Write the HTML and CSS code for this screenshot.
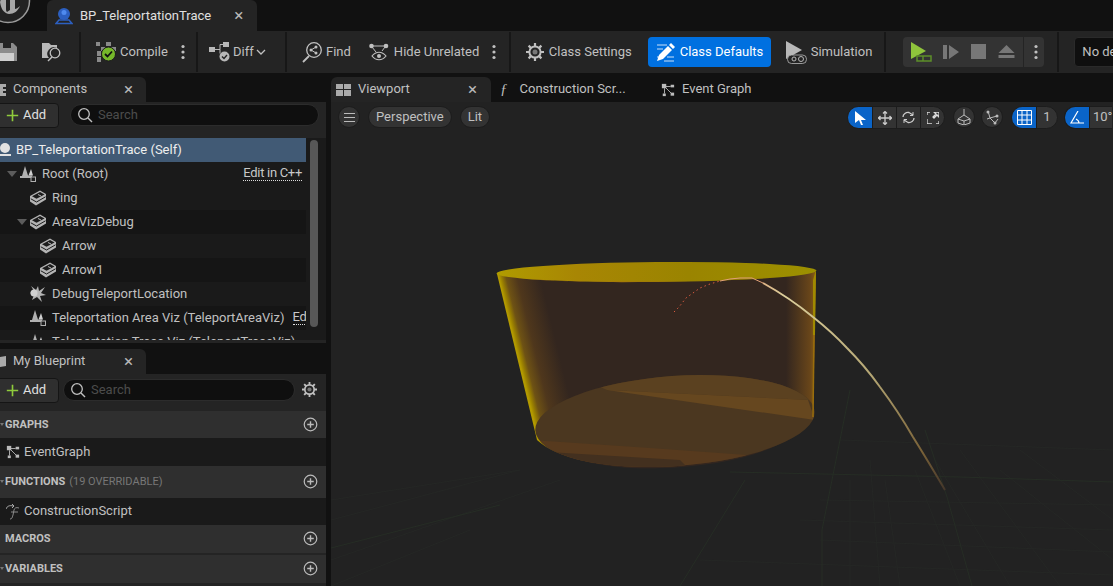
FILE: index.html
```html
<!DOCTYPE html>
<html lang="en">
<head>
    <meta charset="UTF-8">
    <meta name="viewport" content="width=device-width, initial-scale=1.0">
    <title>BP_TeleportationTrace</title>
    <link rel="stylesheet" href="styles.css">
</head>
<body>
    <svg class="defs" width="0" height="0">
        <defs>
            <symbol id="i-cube" viewBox="0 0 16 16">
                <path d="M10 .500 16 4V9.500L6 15.500 0 11.500V6Z" fill="#b4b4b4"/>
                <path d="M10 2 14.500 4.400 6.500 8.800 2 6.200Z" fill="#1c1c1c"/>
                <path d="M8 4.500 11 6" stroke="#b4b4b4"/>
                <path d="M.800 8.800 6.500 12 15.500 6.800" fill="none" stroke="#1c1c1c"/>
            </symbol>
            <symbol id="i-scene" viewBox="0 0 16 16">
                <path d="M5 0 8 9.500H12V12H0V10H2Z" fill="#b0b0b0"/>
                <path d="M11 3 13 9.500H8.500Z" fill="#d0d0d0"/>
                <rect x="11" y="11" width="4.500" height="4.500" fill="#1c1c1c" stroke="#b0b0b0"/>
            </symbol>
            <symbol id="i-plus" viewBox="0 0 16 16">
                <path d="M8 1v14M1 8h14" stroke="#8fcb3c" stroke-width="2"/>
            </symbol>
            <symbol id="i-search" viewBox="0 0 16 16">
                <circle cx="7" cy="7" r="5.300" fill="none" stroke="#c0c0c0" stroke-width="1.300"/>
                <path d="M11 11l4 4" stroke="#c0c0c0" stroke-width="1.500"/>
            </symbol>
            <symbol id="i-add-round" viewBox="0 0 16 16">
                <circle cx="8" cy="8" r="6.700" fill="none" stroke="#bbb" stroke-width="1.300"/>
                <path d="M8 4.500v7M4.500 8h7" stroke="#bbb" stroke-width="1.500"/>
            </symbol>
            <symbol id="i-gear" viewBox="0 0 18 18">
                <circle cx="9" cy="9" r="5.600" fill="none" stroke="#c0c0c0" stroke-width="2"/>
                <circle cx="9" cy="9" r="2.500" fill="#777"/>
                <path d="M9 0v3.500M9 14.500V18M0 9h3.500M14.500 9H18M2.600 2.600l2.500 2.500M12.900 12.900l2.500 2.500M15.400 2.600l-2.500 2.500M5.100 12.900l-2.500 2.500" stroke="#c0c0c0" stroke-width="2.200"/>
            </symbol>
            <symbol id="i-graph" viewBox="0 0 16 16">
                <rect x="1" y="1" width="5" height="5" fill="#bbb"/>
                <rect x="11" y="2" width="4" height="3" fill="#bbb"/>
                <rect x="2" y="12" width="3.500" height="3" fill="#bbb"/>
                <rect x="11" y="11" width="4" height="3.500" fill="#bbb"/>
                <path d="M5 4h6M4 6v6M5 5l7 7" stroke="#bbb"/>
            </symbol>
            <symbol id="i-kebab" viewBox="0 0 4 16">
                <circle cx="2" cy="2.500" r="1.600" fill="#c0c0c0"/>
                <circle cx="2" cy="8" r="1.600" fill="#c0c0c0"/>
                <circle cx="2" cy="13.500" r="1.600" fill="#c0c0c0"/>
            </symbol>
        </defs>
    </svg>

    <div class="app">
        <div class="titlebar">
            <svg class="ue-logo" width="31" height="31" viewBox="0 0 31 31">
                <circle cx="8" cy="1" r="21.500" fill="#222" stroke="#9a9a9a" stroke-width="1.500"/>
                <path d="M0 2c1 6 3 11 9 12 5 0 9-3 11-8-2 2-4 3-5 3V-1H10v11L7 12c-1-1-1-2-1-4V-1H1Z" fill="#a8a8a8"/>
            </svg>
            <div class="doc-tab">
                <svg width="18" height="18" viewBox="0 0 18 18">
                    <circle cx="9" cy="7" r="6" fill="#2c5fc0"/>
                    <circle cx="9" cy="5.500" r="2.500" fill="#4f8aee"/>
                    <path d="M1 16.500 4 13H14L17 16.500Z" fill="none" stroke="#2c5fc0" stroke-width="1.500"/>
                </svg>
                <span class="doc-name">BP_TeleportationTrace</span>
                <span class="close">×</span>
            </div>
        </div>

        <div class="toolbar">
            <div class="tb-group tb-file">
                <svg width="18" height="18" viewBox="0 0 18 18">
                    <path d="M0 0H13L17 4V18H0Z" fill="#8c8c8c"/>
                    <rect x="3" y="0" width="8" height="5" fill="#242424"/>
                    <rect x="0" y="10" width="14" height="8" fill="#cfcfcf"/>
                </svg>
                <svg class="tb-browse" width="21" height="20" viewBox="0 0 21 20">
                    <path d="M0 1H7L9 3H15V6A6.500 6.500 0 0 0 7 16H0Z" fill="#b8b8b8"/>
                    <circle cx="13" cy="11" r="4.800" fill="none" stroke="#c0c0c0" stroke-width="1.300"/>
                    <path d="M10 15l-4 4" stroke="#c0c0c0" stroke-width="1.500"/>
                </svg>
            </div>
            <div class="sep"></div>
            <div class="tb-group tb-compile">
                <svg width="21" height="20" viewBox="0 0 21 20">
                    <path d="M0 0h4v4H0zM5 5h4v4H5zM10 0h5v4h-5zM15 5h5v4h-5zM1 9h4v5H1zM1 15h4v5H1z" fill="#8a8a8a"/>
                    <circle cx="12.500" cy="12" r="7" fill="#76b82a" stroke="#1c1c1c"/>
                    <path d="M9 12l2.500 2.500 4.500-5" fill="none" stroke="#111" stroke-width="1.800"/>
                </svg>
                <span class="tb-label">Compile</span>
                <svg class="kebab" width="4" height="16"><use href="#i-kebab"/></svg>
            </div>
            <div class="sep"></div>
            <div class="tb-group tb-diff">
                <svg width="24" height="20" viewBox="0 0 24 20">
                    <rect x="0" y="5" width="6" height="5" fill="#b8b8b8"/>
                    <rect x="14" y="0" width="6" height="5" fill="#b8b8b8"/>
                    <path d="M6 7.500h5V2.500h3M11 7.500v4" stroke="#b8b8b8" fill="none"/>
                    <circle cx="15.500" cy="14.500" r="5" fill="#b8b8b8"/>
                    <path d="M13 14.500l2 2 3-3.500" fill="none" stroke="#222" stroke-width="1.400"/>
                </svg>
                <span class="tb-label">Diff</span>
                <svg width="10" height="6" viewBox="0 0 10 6"><path d="M1 1l4 4 4-4" fill="none" stroke="#c0c0c0" stroke-width="1.300"/></svg>
            </div>
            <div class="sep"></div>
            <div class="tb-group tb-find">
                <svg width="20" height="22" viewBox="0 0 20 22">
                    <circle cx="12" cy="9" r="7.300" fill="none" stroke="#c0c0c0" stroke-width="1.300"/>
                    <path d="M7 15l-6 6" stroke="#c0c0c0" stroke-width="1.800"/>
                    <path d="M9 9l5-3M9 9l5 3" stroke="#c0c0c0"/>
                    <circle cx="9" cy="9" r="1.500" fill="#c0c0c0"/><circle cx="14" cy="6" r="1.500" fill="#c0c0c0"/><circle cx="14" cy="12" r="1.500" fill="#c0c0c0"/>
                </svg>
                <span class="tb-label">Find</span>
            </div>
            <div class="tb-group tb-hide">
                <svg width="20" height="19" viewBox="0 0 20 19">
                    <circle cx="2.500" cy="3" r="2.300" fill="#c0c0c0"/><circle cx="17" cy="3" r="2.300" fill="#c0c0c0"/>
                    <path d="M2.500 3H17M3 4l4 5M16 4l-3 4" stroke="#c0c0c0"/>
                    <path d="M3 13c4-5 10-5 14 0-4 5-10 5-14 0Z" fill="none" stroke="#c0c0c0" stroke-width="1.200"/>
                    <circle cx="10" cy="13" r="2" fill="#c0c0c0"/>
                </svg>
                <span class="tb-label">Hide Unrelated</span>
                <svg class="kebab" width="4" height="16"><use href="#i-kebab"/></svg>
            </div>
            <div class="sep"></div>
            <div class="tb-group tb-settings">
                <svg width="18" height="18"><use href="#i-gear"/></svg>
                <span class="tb-label">Class Settings</span>
            </div>
            <div class="tb-defaults">
                <svg width="19" height="19" viewBox="0 0 19 19">
                    <path d="M1 2h10M1 6h6M1 14h2M8 18h10M11 14h7" stroke="#fff" stroke-width=".8"/>
                    <path d="M1 18l2-6L12 3l4 4-9 9Z" fill="#fff"/>
                    <path d="M13 2l2-2 4 4-2 2Z" fill="#fff"/>
                </svg>
                <span class="tb-label">Class Defaults</span>
            </div>
            <div class="tb-group tb-sim">
                <svg width="21" height="23" viewBox="0 0 21 23">
                    <path d="M0 0 16 9 0 18Z" fill="#b8b8b8"/>
                    <rect x="1.500" y="14" width="19" height="8.500" rx="4" fill="#242424" stroke="#b8b8b8" stroke-width=".8"/>
                    <circle cx="8" cy="18" r="2" fill="none" stroke="#b8b8b8"/><circle cx="15" cy="18" r="2.500" fill="none" stroke="#b8b8b8"/>
                </svg>
                <span class="tb-label">Simulation</span>
            </div>
            <div class="sep sep-play"></div>
            <div class="play-group">
                <svg class="play-main" width="21" height="20" viewBox="0 0 21 20">
                    <path d="M0 0 15 9 0 17Z" fill="#8fc43c"/>
                    <rect x="6" y="14" width="14" height="5" fill="none" stroke="#5d8f2a" stroke-width="1.500"/>
                    <path d="M12 14v5" stroke="#5d8f2a" stroke-width="1.500"/>
                </svg>
                <svg class="play-ico" width="16" height="16" viewBox="0 0 16 16"><path d="M0 1h4v14H0zM6 1l10 7-10 7Z" fill="#777"/></svg>
                <svg class="play-ico" width="15" height="16" viewBox="0 0 15 16"><rect width="15" height="15" fill="#777"/></svg>
                <svg class="play-ico" width="17" height="16" viewBox="0 0 17 16"><path d="M8.500 1 16.500 9H.500ZM.500 11h16v3H.500Z" fill="#777"/></svg>
                <div class="play-more"><svg width="4" height="16"><use href="#i-kebab"/></svg></div>
            </div>
            <div class="sep sep-target"></div>
            <div class="target-box">No de</div>
        </div>

        <div class="workspace">
            <div class="side">
                <div class="panel-tab">
                    <svg class="tab-ico" width="6" height="12" viewBox="0 0 6 12"><path d="M0 0h6v3H3v2h3v2H3v2h3v3H0Z" fill="#aaa"/></svg>
                    <span class="tab-name">Components</span>
                    <span class="close">×</span>
                </div>
                <div class="panel components">
                    <div class="panel-bar">
                        <div class="add-btn"><svg width="13" height="13"><use href="#i-plus"/></svg><span>Add</span></div>
                        <div class="search-box"><svg width="16" height="16"><use href="#i-search"/></svg><span>Search</span></div>
                    </div>
                    <div class="tree-wrap">
                        <div class="tree">
                            <div class="row selected">
                                <svg width="13" height="14" viewBox="0 0 13 14"><circle cx="5" cy="5" r="5" fill="#e2e2e2"/><path d="M0 12h11" stroke="#e2e2e2" stroke-width="2"/></svg>
                                <span>BP_TeleportationTrace (Self)</span>
                            </div>
                            <div class="row lvl-0">
                                <i class="arrow"></i><svg width="16" height="16"><use href="#i-scene"/></svg>
                                <span>Root (Root)</span><span class="edit">Edit in C++</span>
                            </div>
                            <div class="row alt lvl-1"><svg width="16" height="16"><use href="#i-cube"/></svg><span>Ring</span></div>
                            <div class="row lvl-1b">
                                <i class="arrow"></i><svg width="16" height="16"><use href="#i-cube"/></svg><span>AreaVizDebug</span>
                            </div>
                            <div class="row alt lvl-2"><svg width="16" height="16"><use href="#i-cube"/></svg><span>Arrow</span></div>
                            <div class="row lvl-2"><svg width="16" height="16"><use href="#i-cube"/></svg><span>Arrow1</span></div>
                            <div class="row alt lvl-1">
                                <svg width="16" height="16" viewBox="0 0 16 16"><path d="M8 0 9 5 15 1 11 7 16 9 10 10 12 16 7 11 2 14 4 9 0 7 4 5 1 0 6 4Z" fill="#b4b4b4"/><circle cx="4" cy="7" r="3.500" fill="#d0d0d0"/></svg>
                                <span>DebugTeleportLocation</span>
                            </div>
                            <div class="row lvl-1">
                                <svg width="16" height="16"><use href="#i-scene"/></svg>
                                <span>Teleportation Area Viz (TeleportAreaViz)</span><span class="edit edit-cut">Ed</span>
                            </div>
                            <div class="row alt lvl-1">
                                <svg width="16" height="16"><use href="#i-scene"/></svg>
                                <span>Teleportation Trace Viz (TeleportTraceViz)</span>
                            </div>
                        </div>
                        <div class="scrollbar"></div>
                    </div>
                </div>

                <div class="panel-tab tab-second">
                    <svg class="tab-ico" width="6" height="12" viewBox="0 0 6 12"><path d="M0 1 6 0V10L0 11Z" fill="#aaa"/></svg>
                    <span class="tab-name">My Blueprint</span>
                    <span class="close">×</span>
                </div>
                <div class="panel blueprint">
                    <div class="panel-bar bar-bp">
                        <div class="add-btn"><svg width="13" height="13"><use href="#i-plus"/></svg><span>Add</span></div>
                        <div class="search-box"><svg width="16" height="16"><use href="#i-search"/></svg><span>Search</span></div>
                        <svg class="bp-gear" width="15" height="15"><use href="#i-gear"/></svg>
                    </div>
                    <div class="section"><i class="mini-arrow"></i><b>GRAPHS</b><svg width="15" height="15"><use href="#i-add-round"/></svg></div>
                    <div class="item item-graph">
                        <svg width="14" height="14"><use href="#i-graph"/></svg><span>EventGraph</span>
                    </div>
                    <div class="section sec-tall"><i class="mini-arrow"></i><b>FUNCTIONS</b><em>(19 OVERRIDABLE)</em><svg width="15" height="15"><use href="#i-add-round"/></svg></div>
                    <div class="item item-script">
                        <svg width="15" height="16" viewBox="0 0 15 16"><path d="M0 5c1-3 4-4 7-3M6 0l2 2-2 2" fill="none" stroke="#aaa"/><path d="M4 15c2 0 2-1 3-4l1-5c.5-2 2-3 5-2M5 8h7" fill="none" stroke="#888"/></svg>
                        <span>ConstructionScript</span>
                    </div>
                    <div class="section sec-28"><b>MACROS</b><svg width="15" height="15"><use href="#i-add-round"/></svg></div>
                    <div class="section sec-28 sec-gap"><i class="mini-arrow"></i><b>VARIABLES</b><svg width="15" height="15"><use href="#i-add-round"/></svg></div>
                </div>
            </div>

            <div class="main">
                <div class="main-tabs">
                    <div class="main-tab active">
                        <svg width="15" height="12" viewBox="0 0 15 12"><path d="M0 0h7v5H0zM8 0h7v5H8zM0 6h7v6H0zM8 6h7v6H8z" fill="#aaa"/></svg>
                        <span class="tab-name">Viewport</span>
                        <span class="close">×</span>
                    </div>
                    <div class="main-tab script-tab">
                        <span class="fn-ico">ƒ</span>
                        <span class="tab-name">Construction Scr...</span>
                    </div>
                    <div class="main-tab graph-tab">
                        <svg width="14" height="14"><use href="#i-graph"/></svg>
                        <span class="tab-name">Event Graph</span>
                    </div>
                </div>
                <div class="viewport">
                    <svg class="scene" width="782" height="456" viewBox="331 130 782 456">
                        <defs>
                            <linearGradient id="g-left" gradientUnits="userSpaceOnUse" x1="498" y1="274" x2="547" y2="262">
                                <stop offset="0" stop-color="#b39a00"/>
                                <stop offset=".05" stop-color="#9a8000"/>
                                <stop offset=".14" stop-color="#6e5214"/>
                                <stop offset=".35" stop-color="#4f371c"/>
                                <stop offset=".8" stop-color="#33261f"/>
                            </linearGradient>
                            <linearGradient id="g-right" x1="0" x2="1" y1="0" y2="0">
                                <stop offset="0" stop-color="#7a5018" stop-opacity="0"/>
                                <stop offset=".8" stop-color="#7a5018" stop-opacity=".75"/>
                                <stop offset="1" stop-color="#8f6212"/>
                            </linearGradient>
                            <linearGradient id="g-top" x1="0" x2="1" y1="0" y2="0">
                                <stop offset="0" stop-color="#b09c00"/>
                                <stop offset=".25" stop-color="#a88604"/>
                                <stop offset=".6" stop-color="#9a8400"/>
                                <stop offset="1" stop-color="#9c9000"/>
                            </linearGradient>
                            <linearGradient id="g-top-low" x1="0" x2="1" y1="0" y2="0">
                                <stop offset="0" stop-color="#b07c08" stop-opacity="0"/>
                                <stop offset=".25" stop-color="#b0750a"/>
                                <stop offset=".65" stop-color="#9c7604"/>
                                <stop offset="1" stop-color="#a07a04" stop-opacity="0"/>
                            </linearGradient>
                            <linearGradient id="g-trace" gradientUnits="userSpaceOnUse" x1="740" y1="277" x2="945" y2="490">
                                <stop offset="0" stop-color="#e09a70"/>
                                <stop offset=".15" stop-color="#dccf9c"/>
                                <stop offset=".55" stop-color="#b4a674"/>
                                <stop offset=".85" stop-color="#7a6238"/>
                                <stop offset="1" stop-color="#44362a"/>
                            </linearGradient>
                            <clipPath id="c-floor"><ellipse cx="675" cy="421" rx="140" ry="45" transform="rotate(-4 675 421)"/></clipPath>
                        </defs>

                        <g class="grid-minor">
                            <path d="M331 520 520 470M331 560 560 480M331 586 470 530M960 586 915 470M1010 586 935 460M1060 586 960 450M880 586 870 460M1113 560 1000 470M1113 520 1020 450M900 586 885 480M850 586 850 480"/>
                            <path d="M331 500 520 470M800 520 1113 530M700 560 1113 575M820 500 1113 505M840 440 1113 450M820 540 1113 552"/>
                        </g>
                        <g class="grid-major">
                            <path d="M822 530 850 390M822 586 822 530M947 497 925 430M947 497 972 586M730 472 960 477 1113 482M680 586 745 480M331 548 500 505"/>
                        </g>

                        <path d="M497 274 537 440C560 462 620 470 660 468 730 466 790 450 813 417L816 270Z" fill="url(#g-left)"/>
                        <path d="M786 272H816L813 417 786 436Z" fill="url(#g-right)"/>

                        <ellipse cx="675" cy="421" rx="140" ry="45" transform="rotate(-4 675 421)" fill="#4b3720"/>
                        <g clip-path="url(#c-floor)">
                            <path d="M540 360 H830 V400 L808 400 607 390 Z" fill="#5b4120"/>
                            <path d="M607 390 808 400 815 420Z" fill="#66471f"/>
                            <path d="M530 440 650 448 747 455 700 480H530Z" fill="#573a1e"/>
                            <path d="M548 452 680 460 700 480H548Z" fill="#43301f"/>
                        </g>
                        <path d="M813 280 816 270 815 335 813 335Z" fill="#a08a00"/>
                        <path class="edge-right" d="M814 335 813 417"/>

                        <ellipse cx="656.500" cy="272" rx="160" ry="10" transform="rotate(-.5 656 272)" fill="url(#g-top)"/>
                        <path d="M505 277C560 284 680 284 790 276L760 279C680 282 600 282 560 281Z" fill="url(#g-top-low)"/>

                        <path class="trace-red" d="M674 312 679 307 686 298 693 293 700 288 710 284 720 281"/>
                        <path class="trace-near" d="M720 281 730 279 740 278 752 278 763 283"/>
                        <path class="trace" d="M763 283Q790 298 813 317 832 332 847 348 865 366 880 387 898 411 913 437 928 461 945 490"/>
                    </svg>
                    <div class="vp-toolbar">
                        <div class="vp-left">
                            <div class="pill round">
                                <svg width="11" height="9" viewBox="0 0 11 9"><path d="M0 .500h11M0 4.500h11M0 8.500h11" stroke="#bbb"/></svg>
                            </div>
                            <div class="pill">Perspective</div>
                            <div class="pill">Lit</div>
                        </div>
                        <div class="vp-right">
                            <div class="seg-group g-transform">
                                <div class="seg on"><svg width="11" height="14" viewBox="0 0 11 14"><path d="M0 0 11 9H6L8 14H6L4 9 0 12Z" fill="#fff"/></svg></div>
                                <div class="seg"><svg width="14" height="14" viewBox="0 0 14 14"><path d="M7 0v14M0 7h14M5 2.500 7 .500 9 2.500M5 11.500 7 13.500 9 11.500M2.500 5 .500 7 2.500 9M11.500 5 13.500 7 11.500 9" fill="none" stroke="#ccc" stroke-width="1.300"/></svg></div>
                                <div class="seg"><svg width="13" height="13" viewBox="0 0 13 13"><path d="M1 6C1 3 4 1 7 1.500L11 4M12 7c0 3-3 5-6 4.500L2 9" fill="none" stroke="#ccc" stroke-width="1.300"/><path d="M11 1v3.500H8M2 12V8.500H5" fill="none" stroke="#ccc"/></svg></div>
                                <div class="seg"><svg width="12" height="12" viewBox="0 0 12 12"><path d="M7 0h5v5L10 3 7 6 6 5 9 2ZM0 7v5h5M0 0h3M0 0v3M12 9v3H9" fill="none" stroke="#ddd" stroke-width="1.300"/></svg></div>
                            </div>
                            <div class="pill round wide">
                                <svg width="14" height="16" viewBox="0 0 14 16"><path d="M7 0v6M7 6 1 10v4L7 16l6-2v-4L7 6ZM1 10l6 2 6-2M7 12v4" fill="none" stroke="#bbb"/></svg>
                            </div>
                            <div class="pill round wide next">
                                <svg width="15" height="15" viewBox="0 0 15 15"><path d="M3 1 5 8 2 9M5 8l7-2M5 8l5 5 3-4" fill="none" stroke="#bbb"/><circle cx="3" cy="2" r="1.500" fill="#bbb"/><circle cx="10" cy="13" r="1.500" fill="#bbb"/><circle cx="12" cy="6" r="1.500" fill="#bbb"/></svg>
                            </div>
                            <div class="seg-group g-grid">
                                <div class="seg on"><svg width="15" height="15" viewBox="0 0 15 15"><path d="M.500.500h14v14H.500zM.500 5h14M.500 10h14M5 .500v14M10 .500v14" fill="none" stroke="#fff"/></svg></div>
                                <div class="seg val">1</div>
                            </div>
                            <div class="seg-group g-angle">
                                <div class="seg on"><svg width="15" height="13" viewBox="0 0 15 13"><path d="M8 0 1 12h13M9 12c0-2-1-3-3-4" fill="none" stroke="#fff" stroke-width="1.200"/></svg></div>
                                <div class="seg val">10°</div>
                            </div>
                        </div>
                    </div>
                </div>
            </div>
        </div>
    </div>
</body>
</html>
```
FILE: styles.css
```css
html, body {
    margin: 0;
    height: 100%;
    overflow: hidden;
    background: #111;
}

body {
    font-family: Roboto, "Liberation Sans", sans-serif;
    font-size: 13px;
    color: #c0c0c0;
}

.defs {
    position: absolute;
}

.app {
    width: 1113px;
    height: 586px;
    display: flex;
    flex-direction: column;
    overflow: hidden;
}

svg {
    flex: none;
    display: block;
}

.close {
    font-size: 17px;
    line-height: 1;
    color: #b8b8b8;
}

/* title row */
.titlebar {
    height: 31px;
    display: flex;
    background: #111;
}

.ue-logo {
    margin-right: 16px;
}

.doc-tab {
    width: 210px;
    display: flex;
    align-items: center;
    padding-left: 8px;
    box-sizing: border-box;
    background: #242424;
    border-radius: 6px 6px 0 0;
}

.doc-name {
    margin-left: 7px;
    color: #e0e0e0;
}

.doc-tab .close {
    margin-left: 23px;
}

/* main toolbar */
.toolbar {
    height: 42px;
    display: flex;
    align-items: center;
    background: #242424;
    overflow: hidden;
}

.toolbar > * {
    flex: none;
}

.sep {
    width: 2px;
    height: 40px;
    background: #171717;
}

.tb-group {
    display: flex;
    align-items: center;
}

.tb-label {
    color: #c0c0c0;
    white-space: nowrap;
    margin-bottom: 2px;
}

.tb-file {
    width: 79px;
}

.tb-browse {
    margin-left: 24px;
}

.tb-compile {
    width: 115px;
    padding-left: 15px;
    box-sizing: border-box;
}

.tb-compile .tb-label {
    margin-left: 3px;
}

.kebab {
    margin-left: 13px;
}

.tb-diff {
    width: 87px;
    padding-left: 11px;
    box-sizing: border-box;
}

.tb-diff svg:last-child {
    margin-left: 2px;
}

.tb-find {
    padding-left: 15px;
}

.tb-find .tb-label {
    margin-left: 4px;
}

.tb-hide {
    margin-left: 18px;
    width: 140px;
}

.tb-hide .tb-label {
    margin-left: 5px;
}

.tb-settings {
    margin-left: 15px;
}

.tb-settings .tb-label {
    margin-left: 5px;
}

.tb-defaults {
    width: 123px;
    height: 30px;
    margin-left: 16px;
    display: flex;
    align-items: center;
    padding-left: 8px;
    box-sizing: border-box;
    gap: 5px;
    background: #0070e0;
    border-radius: 4px;
}

.tb-defaults .tb-label {
    color: #fff;
}

.tb-sim {
    margin-left: 15px;
}

.tb-sim .tb-label {
    margin-left: 4px;
}

.sep-play {
    margin-left: 12px;
}

.play-group {
    width: 141px;
    height: 30px;
    margin-left: 17px;
    display: flex;
    align-items: center;
    padding-left: 8px;
    box-sizing: border-box;
    background: #333;
    border-radius: 4px;
}

.play-ico {
    margin-left: 12px;
}

.play-main + .play-ico {
    margin-left: 11px;
}

.play-more {
    height: 30px;
    margin-left: 8px;
    padding-left: 10px;
    display: flex;
    align-items: center;
    border-left: 1px solid #242424;
}

.sep-target {
    margin-left: 13px;
}

.target-box {
    width: 60px;
    height: 30px;
    margin-left: 15px;
    padding-left: 7px;
    line-height: 27px;
    background: #0f0f0f;
    border: 1px solid #2a2a2a;
    border-radius: 4px;
    box-sizing: border-box;
}

/* below the toolbar */
.workspace {
    flex: 1;
    display: flex;
    padding-top: 4px;
    min-height: 0;
}

.side {
    width: 326px;
    margin-right: 5px;
    display: flex;
    flex-direction: column;
}

.panel-tab {
    width: 146px;
    height: 25px;
    flex: none;
    display: flex;
    align-items: center;
    background: #242424;
    border-radius: 0 6px 0 0;
    box-sizing: border-box;
}

.tab-second {
    margin-top: 6px;
}

.tab-ico {
    margin-right: 7px;
}

.tab-name {
    color: #c0c0c0;
    margin-bottom: 2px;
}

.panel-tab .close {
    margin-left: auto;
    margin-right: 13px;
}

.panel {
    background: #242424;
}

.components {
    height: 241px;
    flex: none;
    overflow: hidden;
}

.panel-bar {
    height: 36px;
    display: flex;
    align-items: flex-start;
    padding-top: 1px;
    box-sizing: border-box;
}

.add-btn {
    width: 69px;
    height: 25px;
    margin-left: -10px;
    flex: none;
    display: flex;
    align-items: center;
    padding-left: 15px;
    gap: 4px;
    box-sizing: border-box;
    background: #2f2f2f;
    border: 1px solid #151515;
    border-radius: 4px;
    color: #e0e0e0;
}

.add-btn span, .search-box span, .row span, .item span {
    margin-bottom: 2px;
}

.search-box {
    width: 249px;
    height: 22px;
    margin: 1px 0 0 11px;
    flex: none;
    display: flex;
    align-items: center;
    padding-left: 6px;
    gap: 5px;
    box-sizing: border-box;
    background: #0f0f0f;
    border: 1px solid #2c2c2c;
    border-radius: 11px;
    color: #4c4c4c;
}

.tree-wrap {
    display: flex;
    height: 202px;
    overflow: hidden;
    background: #1a1a1a;
}

.tree {
    width: 306px;
    flex: none;
}

.row {
    height: 24px;
    display: flex;
    align-items: center;
    white-space: nowrap;
    overflow: hidden;
    gap: 6px;
    background: #151515;
}

.row.alt {
    background: #1a1a1a;
}

.row.selected {
    background: #415a75;
    color: #eee;
    gap: 3px;
}

.lvl-0 {
    padding-left: 7px;
    background: #1a1a1a;
}

.lvl-0 .arrow {
    margin-right: -3px;
}

.lvl-1 {
    padding-left: 30px;
}

.lvl-1b {
    padding-left: 17px;
}

.lvl-1b .arrow {
    margin-right: -3px;
}

.lvl-2 {
    padding-left: 40px;
}

.arrow {
    width: 0;
    height: 0;
    flex: none;
    border-left: 5px solid transparent;
    border-right: 5px solid transparent;
    border-top: 6px solid #5c5c5c;
}

.edit {
    margin-left: auto;
    margin-right: 4px;
    border-bottom: 1px dotted #ddd;
    line-height: 14px;
    letter-spacing: -.3px;
    color: #c8c8c8;
}

.edit-cut {
    margin-left: 2px;
    margin-right: 0;
}

.scrollbar {
    width: 8px;
    height: 187px;
    margin: 2px 0 0 4px;
    background: #575757;
    border-radius: 4px;
}

.blueprint {
    flex: 1;
}

.bar-bp {
    height: 37px;
    padding-top: 4px;
}

.bar-bp .search-box {
    width: 232px;
    margin-left: 4px;
}

.bp-gear {
    margin: 4px 0 0 7px;
}

.section {
    height: 27px;
    display: flex;
    align-items: center;
    padding-left: 5px;
    background: #2f2f2f;
    box-sizing: border-box;
    font-size: 11px;
    color: #c0c0c0;
    position: relative;
}

.section b {
    font-weight: 700;
}

.section em {
    font-style: normal;
    margin-left: 4px;
    color: #777;
}

.section svg {
    margin-left: auto;
    margin-right: 8px;
}

.sec-tall {
    height: 32px;
    padding-bottom: 2px;
}

.sec-28 {
    height: 28px;
    padding-bottom: 1px;
}

.sec-gap {
    margin-top: 2px;
}

.mini-arrow {
    position: absolute;
    left: 0;
    width: 0;
    height: 0;
    border-left: 2px solid transparent;
    border-right: 2px solid transparent;
    border-top: 3px solid #777;
}

.item {
    height: 27px;
    display: flex;
    align-items: center;
    padding-left: 6px;
    gap: 4px;
    background: #1a1a1a;
}

.item-graph {
    height: 28px;
}

.item-script {
    gap: 3px;
}

/* centre area */
.main {
    flex: 1;
    min-width: 0;
    display: flex;
    flex-direction: column;
}

.main-tabs {
    height: 25px;
    flex: none;
    display: flex;
    background: #111;
}

.main-tab {
    display: flex;
    align-items: center;
    box-sizing: border-box;
}

.main-tab.active {
    width: 160px;
    padding-left: 5px;
    background: #242424;
    border-radius: 6px 6px 0 0;
    gap: 7px;
}

.main-tab.active .close {
    margin-left: auto;
    margin-right: 14px;
}

.script-tab {
    width: 170px;
    padding-left: 9px;
    gap: 12px;
}

.fn-ico {
    font-family: "Liberation Serif", serif;
    font-style: italic;
    font-size: 15px;
    color: #bbb;
}

.graph-tab {
    gap: 7px;
}

.viewport {
    flex: 1;
    position: relative;
    background: #222222;
    overflow: hidden;
}

.scene {
    position: absolute;
    left: 0;
    top: 28px;
}

.grid-minor path {
    fill: none;
    stroke: #252725;
}

.grid-major path {
    fill: none;
    stroke: #262d25;
}

.edge-right {
    fill: none;
    stroke: #9a6e0c;
    stroke-width: 1.500;
}

.trace {
    fill: none;
    stroke: url(#g-trace);
    stroke-width: 2;
}

.trace-near {
    fill: none;
    stroke: #e0a078;
    stroke-width: 1;
}

.trace-red {
    fill: none;
    stroke: #d85a40;
    stroke-width: 1;
    stroke-dasharray: 1.500 3;
}

.vp-toolbar {
    position: relative;
    height: 28px;
    display: flex;
    justify-content: space-between;
    padding: 4px 0 0 7px;
    box-sizing: border-box;
}

.vp-left, .vp-right {
    display: flex;
    align-items: flex-start;
}

.vp-left {
    gap: 8px;
}

.pill {
    height: 22px;
    flex: none;
    display: flex;
    align-items: center;
    justify-content: center;
    padding: 0 7px 2px;
    box-sizing: border-box;
    background: #333;
    border: 1px solid #1c1c1c;
    border-radius: 11px;
}

.pill.round {
    width: 22px;
    padding: 0;
}

.vp-right {
    flex: none;
    width: 266px;
}

.pill.wide {
    margin-left: 8px;
}

.pill.wide.next {
    margin-left: 6px;
}

.pill.wide + .seg-group {
    margin-left: 8px;
}

.seg-group {
    height: 23px;
    display: flex;
    flex: none;
    background: #333;
    border: 1px solid #1c1c1c;
    border-radius: 12px;
    overflow: hidden;
    box-sizing: border-box;
}

.seg {
    width: 24px;
    flex: none;
    display: flex;
    align-items: center;
    justify-content: center;
    border-left: 1px solid #1c1c1c;
    box-sizing: border-box;
}

.seg.on {
    background: #0a64c8;
    border-left: none;
}

.g-grid .val {
    width: 21px;
    padding-bottom: 2px;
}

.g-angle {
    margin-left: 6px;
    width: 48px;
    border-radius: 12px 0 0 12px;
    border-right: none;
}

.g-angle .val {
    width: 24px;
    padding-bottom: 2px;
    justify-content: flex-start;
    padding-left: 3px;
}
```
